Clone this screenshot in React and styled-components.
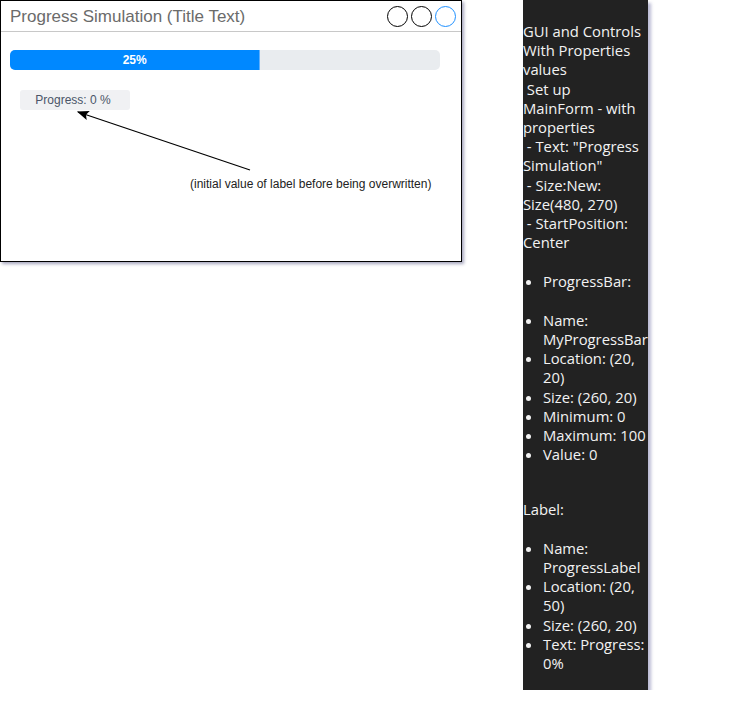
import React from 'react';
import styled, { createGlobalStyle } from 'styled-components';

const GlobalStyle = createGlobalStyle`
  body {
    margin: 0;
    background: #ffffff;
    font-family: "Liberation Sans", Arial, sans-serif;
  }
`

const Pagina = styled.div`
  display: flex;
  align-items: flex-start;
  gap: 61px;
`
const Janela = styled.div`
  position: relative;
  width: 460px;
  height: 260px;
  border: 1px solid #000;
  background: #fff;
  box-shadow: 2px 2px 3px rgba(60, 60, 110, 0.45);
`
const BarraTitulo = styled.div`
  display: flex;
  align-items: center;
  justify-content: space-between;
  height: 29px;
  padding: 1px 5px 0 9px;
  border-bottom: 1px solid #c8c8c8;
`
const Titulo = styled.span`
  font-size: 17px;
  color: #6b6b6b;
`
const Botoes = styled.div`
  display: flex;
  gap: 3px;
`
const Circulo = styled.span`
  width: 19px;
  height: 19px;
  border-radius: 50%;
  border: 1.3px solid ${p => (p.azul ? '#1e90ff' : '#000')};
`
const Conteudo = styled.div`
  display: flex;
  flex-direction: column;
  align-items: flex-start;
  padding: 18px 20px 0 9px;
  gap: 20px;
`
const Trilho = styled.div`
  display: flex;
  width: 430px;
  height: 20px;
  background: #e9ecef;
  border-radius: 5px;
  overflow: hidden;
`
const Preenchimento = styled.div`
  display: flex;
  align-items: center;
  justify-content: center;
  height: 100%;
  background: #0088ff;
  border-right: 1px solid #5fb0ff;
  color: #fff;
  font-size: 12px;
  font-weight: bold;
`
const Rotulo = styled.div`
  display: flex;
  align-items: center;
  justify-content: center;
  margin-left: 10px;
  width: 110px;
  height: 20px;
  padding-right: 4px;
  box-sizing: border-box;
  background: #f0f1f3;
  border-radius: 3px;
  color: #4a5568;
  font-size: 12px;
`
const Seta = styled.svg`
  position: absolute;
  left: 0;
  top: 0;
  pointer-events: none;
`
const Nota = styled.span`
  position: absolute;
  left: 189px;
  top: 176px;
  font-size: 12px;
  color: #222;
`

const Painel = styled.div`
  width: 125px;
  height: 668px;
  padding-top: 22px;
  background: #222222;
  color: #f2f2f2;
  font-family: "Open Sans", "Noto Sans", sans-serif;
  font-size: 14.8px;
  line-height: 19.2px;
  white-space: pre;
  box-shadow: 3px 3px 3px rgba(120, 120, 170, 0.5);
`
const Lista = styled.ul`
  margin: 20px 0 16px;
  padding-left: 20px;
`
const Item = styled.li`
  margin: 0;
`
const Espaco = styled.div`
  height: 19.2px;
`

const textoInicial = [
  'GUI and Controls',
  'With Properties',
  'values',
  ' Set up',
  'MainForm - with',
  'properties',
  ' - Text: "Progress',
  'Simulation"',
  ' - Size:New:',
  'Size(480, 270)',
  ' - StartPosition:',
  'Center'
].join('\n')

const itensBarra = ['Name:\nMyProgressBar', 'Location: (20,\n20)', 'Size: (260, 20)', 'Minimum: 0', 'Maximum: 100', 'Value: 0']
const itensRotulo = ['Name:\nProgressLabel', 'Location: (20,\n50)', 'Size: (260, 20)', 'Text: Progress:\n0%']

class App extends React.Component {
  state = {
    progresso: 58
  }

  render() {
    return (
      <Pagina>
        <GlobalStyle />
        <Janela>
          <BarraTitulo>
            <Titulo>Progress Simulation (Title Text)</Titulo>
            <Botoes>
              <Circulo />
              <Circulo />
              <Circulo azul />
            </Botoes>
          </BarraTitulo>
          <Conteudo>
            <Trilho>
              <Preenchimento style={{ width: this.state.progresso + '%' }}>25%</Preenchimento>
            </Trilho>
            <Rotulo>Progress: 0 %</Rotulo>
          </Conteudo>
          <Seta width="460" height="260">
            <defs>
              <marker id="ponta" markerWidth="10" markerHeight="8" refX="9" refY="4" orient="auto">
                <path d="M0,0 L10,4 L0,8 L2,4 Z" fill="#000" />
              </marker>
            </defs>
            <line x1="249" y1="169" x2="77" y2="111" stroke="#000" strokeWidth="1.2" markerEnd="url(#ponta)" />
          </Seta>
          <Nota>(initial value of label before being overwritten)</Nota>
        </Janela>

        <Painel>
          {textoInicial}
          <Lista>
            <Item>ProgressBar:</Item>
            <Espaco />
            {itensBarra.map(i => <Item key={i}>{i}</Item>)}
          </Lista>
          <Espaco />
          {'Label:'}
          <Lista>
            {itensRotulo.map(i => <Item key={i}>{i}</Item>)}
          </Lista>
        </Painel>
      </Pagina>
    );
  }
}

export default App;
